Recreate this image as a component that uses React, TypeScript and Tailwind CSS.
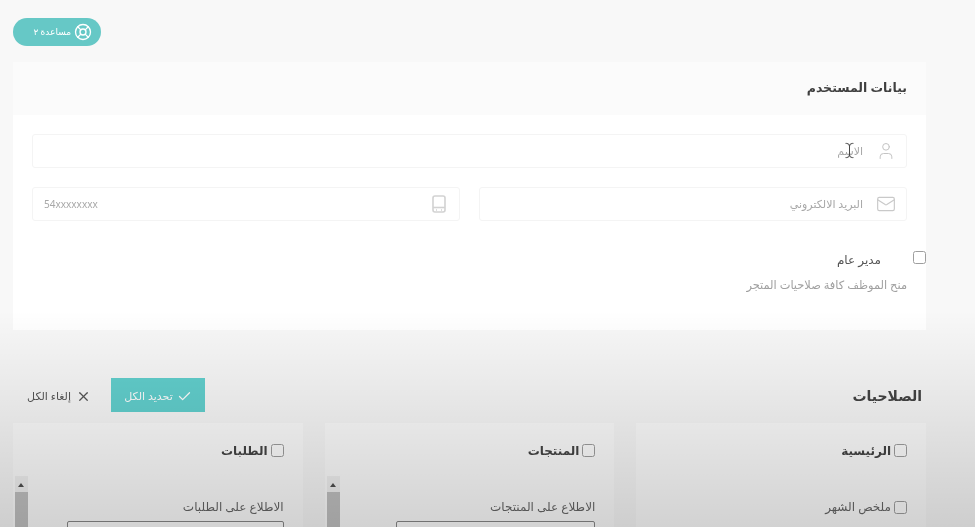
import { Check, LifeBuoy, Mail, TextCursor, User, X } from "lucide-react";

const font = { fontFamily: '"Noto Sans", "DejaVu Sans", sans-serif' };

function DeviceIcon() {
  return (
    <svg width="14" height="18" viewBox="0 0 14 18" fill="none" stroke="#d2d2d2" strokeWidth="1.6">
      <rect x="1" y="1" width="12" height="16" rx="2" />
      <path d="M1 12.5h12" />
      <path d="M4 15h1M9 15h1" />
    </svg>
  );
}

function Field({ icon, placeholder, ltr }: { icon: React.ReactNode; placeholder: string; ltr?: boolean }) {
  return (
    <div className="flex h-[34px] flex-1 items-center rounded-[3px] border border-[#f4f4f4] bg-white">
      <span className="flex w-[41px] shrink-0 justify-center">{icon}</span>
      <input
        readOnly
        placeholder={placeholder}
        dir={ltr ? "ltr" : "rtl"}
        className={`min-w-0 flex-1 bg-transparent pr-[2px] pl-[11px] outline-none placeholder:text-[#a8a8a8] ${ltr ? "text-left text-[10px]" : "text-right text-[11px]"}`}
      />
    </div>
  );
}

function PermissionCard({ title, label, box, scroll }: { title: string; label: string; box?: string; scroll?: boolean }) {
  return (
    <div className="h-[130px] flex-1 bg-[#fdfdfd]">
      <div className="flex h-[53px] items-center gap-[3px] pt-[2px] pr-[19px]">
        <input type="checkbox" readOnly className="size-[13px] opacity-70" />
        <span className="text-[12px] font-bold text-[#444]">{title}</span>
      </div>
      <div className="relative h-[77px] pt-[22px] pr-[19px]">
        {scroll ? (
          <div className="flex items-center gap-[3px]">
            <input type="checkbox" readOnly className="size-[13px] opacity-70" />
            <span className="text-[12px] text-[#666]">{label}</span>
          </div>
        ) : (
          <>
            <div className="text-[12px] leading-[18px] text-[#666]">{label}</div>
            <div className={`mt-[5px] h-[30px] rounded-[2px] border border-[#888] bg-white ${box}`} />
            <div className="absolute top-0 left-[2px] h-full w-[13px] bg-[#f1f1f1]">
              <div className="mx-auto mt-[7px] h-0 w-0 border-x-[3px] border-b-[4px] border-x-transparent border-b-[#505050]" />
              <div className="mt-[5px] h-full bg-[#c1c1c1]" />
            </div>
          </>
        )}
      </div>
    </div>
  );
}

export default function App() {
  return (
    <div dir="rtl" style={font} className="relative h-[527px] w-[975px] overflow-hidden bg-[#f8f8f8] pr-[49px] pl-[13px] blur-[0.4px]">
      {/* top bar */}
      <div className="flex h-[62px] justify-end pt-[18px]">
        <button className="flex h-[28px] w-[88px] items-center gap-[3px] rounded-full bg-[#66c8c6] pr-[9px] text-white">
          <LifeBuoy size={18} strokeWidth={1.8} />
          <span className="text-[9px] whitespace-nowrap">مساعدة ٢</span>
        </button>
      </div>

      {/* user data */}
      <section className="h-[268px] bg-white">
        <div className="flex h-[53px] items-center bg-[#fbfbfb] pr-[19px]">
          <h2 className="text-[12.5px] font-bold text-[#3f3f3f]">بيانات المستخدم</h2>
        </div>
        <div className="px-[19px] pt-[19px]">
          <Field icon={<User size={20} strokeWidth={1.2} color="#c4c4c4" />} placeholder="الاسم" />
          <div className="mt-[19px] flex gap-[19px]">
            <Field icon={<Mail size={20} strokeWidth={1.4} color="#c9c9c9" />} placeholder="البريد الالكتروني" />
            <Field icon={<DeviceIcon />} placeholder="54xxxxxxxx" ltr />
          </div>
          <div className="relative mt-[30px] pr-[26px] text-[12px] leading-[18px] text-[#555]">
            مدير عام
            <input type="checkbox" readOnly className="absolute top-0 -right-[19px] size-[13px] opacity-70" />
          </div>
          <p className="mt-[8px] text-[11.4px] leading-[16px] text-[#a0a0a0]">منح الموظف كافة صلاحيات المتجر</p>
        </div>
      </section>

      {/* permissions */}
      <div className="mt-[48px] flex h-[34px] items-center justify-between">
        <h2 className="mr-[4px] text-[14px] font-bold text-[#444]">الصلاحيات</h2>
        <div className="flex items-center gap-[13px]">
          <button className="flex h-[34px] w-[94px] items-center justify-center gap-[4px] bg-[#62d0ce] pt-[2px] text-[11px] text-white">
            <Check size={15} />
            تحديد الكل
          </button>
          <button className="ml-[7px] flex h-[30px] w-[78px] items-center justify-center gap-[5px] bg-[#f8f8f8] pt-[2px] text-[11px] text-[#555]">
            <X size={15} />
            إلغاء الكل
          </button>
        </div>
      </div>
      <div className="mt-[11px] flex gap-[22px]">
        <PermissionCard title="الرئيسية" label="ملخص الشهر" scroll />
        <PermissionCard title="المنتجات" label="الاطلاع على المنتجات" box="w-[199px]" />
        <PermissionCard title="الطلبات" label="الاطلاع على الطلبات" box="w-[217px]" />
      </div>

      {/* bottom fade over the page */}
      <div className="pointer-events-none absolute inset-x-0 top-[310px] bottom-0 bg-gradient-to-b from-black/0 to-black/[0.17]" />
      <TextCursor size={17} strokeWidth={1.4} color="#444" className="pointer-events-none absolute top-[142px] left-[841px]" />
    </div>
  );
}
